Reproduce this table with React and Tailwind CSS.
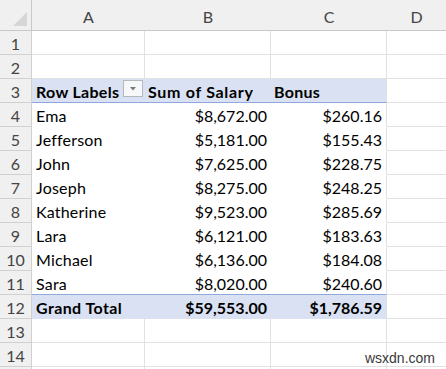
import React from "react";

const rows = [
  ["Ema", "$8,672.00", "$260.16"],
  ["Jefferson", "$5,181.00", "$155.43"],
  ["John", "$7,625.00", "$228.75"],
  ["Joseph", "$8,275.00", "$248.25"],
  ["Katherine", "$9,523.00", "$285.69"],
  ["Lara", "$6,121.00", "$183.63"],
  ["Michael", "$6,136.00", "$184.08"],
  ["Sara", "$8,020.00", "$240.60"],
];

function RowNum({ n }) {
  return (
    <div className="w-[32px] shrink-0 h-full flex items-end justify-center border-r border-b border-[#d0d0d0] bg-[#f0f0f0] text-[#444] pb-[1px]">
      {n}
    </div>
  );
}

function EmptyRow({ n }) {
  return (
    <div className="flex h-[24px]">
      <RowNum n={n} />
      <div className="w-[113px] shrink-0 border-r border-b border-[#e1e1e1]" />
      <div className="w-[126px] shrink-0 border-r border-b border-[#e1e1e1]" />
      <div className="w-[116px] shrink-0 border-r border-b border-[#e1e1e1]" />
      <div className="flex-1 border-b border-[#e1e1e1]" />
    </div>
  );
}

export default function App() {
  return (
    <div className="relative w-[446px] h-[369px] overflow-hidden bg-white font-['Lato',sans-serif] text-[16px] leading-[18px] text-black">
      {/* column headers */}
      <div className="flex h-[31px] bg-[#f0f0f0] text-[#444]">
        <div className="relative w-[32px] shrink-0 border-r border-b border-[#c8c8c8]">
          <svg className="absolute left-[12px] top-[11px]" width="16" height="16" viewBox="0 0 16 16">
            <polygon points="1,15 15,15 15,1" fill="#d6d6d6" />
          </svg>
        </div>
        <div className="w-[113px] shrink-0 flex items-end justify-center pb-[4px] border-b border-[#c8c8c8]">A</div>
        <div className="w-[126px] shrink-0 flex items-end justify-center pb-[4px] border-b border-[#c8c8c8]">B</div>
        <div className="w-[116px] shrink-0 flex items-end justify-center pb-[4px] border-b border-[#c8c8c8]">C</div>
        <div className="flex-1 flex items-end justify-center pb-[4px] border-b border-[#c8c8c8]">D</div>
      </div>

      <EmptyRow n={1} />
      <EmptyRow n={2} />

      {/* row 3 pivot header */}
      <div className="flex h-[24px]">
        <RowNum n={3} />
        <div className="relative w-[113px] shrink-0 flex items-end bg-[#d9e1f2] border-b border-[#8ea9db] pl-[4px] pb-[1px] font-bold">
          <span className="tracking-[0.3px]">Row Labels</span>
          <div className="absolute right-[2px] top-[1px] w-[20px] h-[17px] border border-[#b4b8bf] bg-[#f7f8fa] flex items-center justify-center">
            <svg width="6" height="4" viewBox="0 0 6 4">
              <polygon points="0,0 6,0 3,3.5" fill="#7a7a7a" />
            </svg>
          </div>
        </div>
        <div className="w-[126px] shrink-0 flex items-end bg-[#d9e1f2] border-b border-[#8ea9db] pl-[3px] pb-[1px] font-bold tracking-[0.7px]">
          Sum of Salary
        </div>
        <div className="w-[116px] shrink-0 flex items-end bg-[#d9e1f2] border-b border-r border-[#8ea9db] border-r-[#e1e1e1] pl-[3px] pb-[1px] font-bold tracking-[0.3px]">
          Bonus
        </div>
        <div className="flex-1 border-b border-[#e1e1e1]" />
      </div>

      {rows.map((r, i) => {
        const last = i === rows.length - 1;
        const bb = last ? "border-b border-b-[#8ea9db]" : "border-b border-b-transparent";
        return (
          <div key={r[0]} className="flex h-[24px]">
            <RowNum n={i + 4} />
            <div className={`w-[113px] shrink-0 flex items-end pl-[4px] pb-[1px] tracking-[0.2px] ${bb}`}>{r[0]}</div>
            <div className={`w-[126px] shrink-0 flex items-end justify-end pr-[4px] pb-[1px] ${bb}`}>{r[1]}</div>
            <div className={`w-[116px] shrink-0 flex items-end justify-end pr-[4px] pb-[1px] border-r border-r-[#e1e1e1] ${bb}`}>{r[2]}</div>
            <div className="flex-1 border-b border-[#e1e1e1]" />
          </div>
        );
      })}

      {/* grand total */}
      <div className="flex h-[24px]">
        <RowNum n={12} />
        <div className="w-[113px] shrink-0 flex items-end pl-[4px] pb-[1px] bg-[#d9e1f2] border-b border-b-transparent font-bold tracking-[0.4px]">Grand Total</div>
        <div className="w-[126px] shrink-0 flex items-end justify-end pr-[4px] pb-[1px] bg-[#d9e1f2] border-b border-b-transparent font-bold">$59,553.00</div>
        <div className="w-[116px] shrink-0 flex items-end justify-end pr-[4px] pb-[1px] bg-[#d9e1f2] border-b border-b-transparent border-r border-r-[#e1e1e1] font-bold">$1,786.59</div>
        <div className="flex-1 border-b border-[#e1e1e1]" />
      </div>

      <EmptyRow n={13} />
      <EmptyRow n={14} />
      <EmptyRow n="" />

      <div className="absolute right-[11px] bottom-[3px] text-[14px] leading-[16px] text-[#3a3a3a] font-['Liberation_Sans',sans-serif]">
        wsxdn.com
      </div>
    </div>
  );
}
